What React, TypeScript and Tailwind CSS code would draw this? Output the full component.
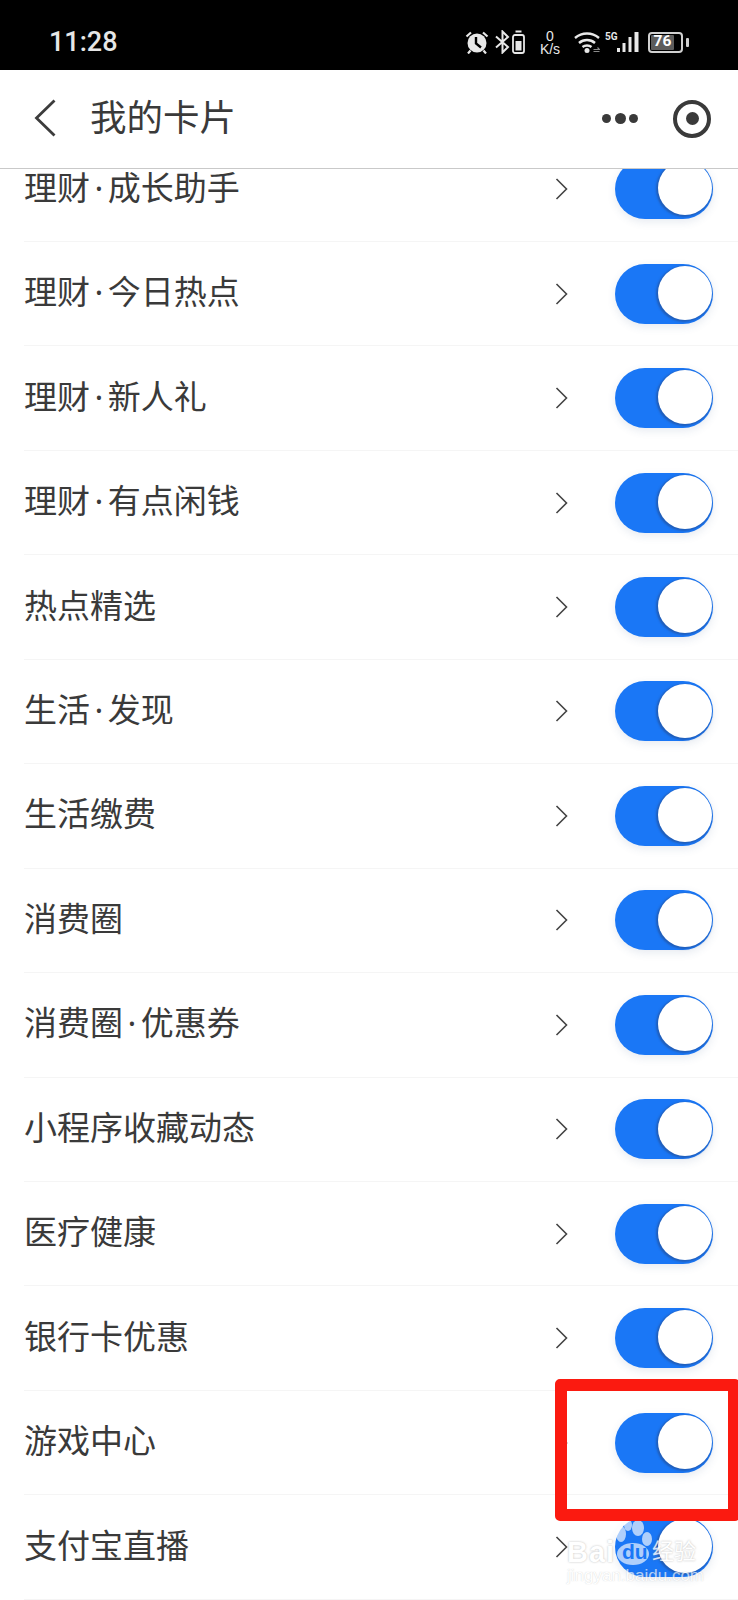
const rows = [
  "理财·成长助手",
  "理财·今日热点",
  "理财·新人礼",
  "理财·有点闲钱",
  "热点精选",
  "生活·发现",
  "生活缴费",
  "消费圈",
  "消费圈·优惠券",
  "小程序收藏动态",
  "医疗健康",
  "银行卡优惠",
  "游戏中心",
  "支付宝直播",
];

function StatusIcons() {
  return (
    <div className="flex items-center text-[#e8e8e8]">
      {/* Alarm */}
      <svg width="24" height="24" viewBox="0 0 24 24">
        <circle cx="12" cy="13" r="9.500" fill="currentColor" />
        <path d="M11 7v6.500l5 4" stroke="#000" strokeWidth="2.400" fill="none" />
        <path d="M1.500 6.500L6 2.500M22.500 6.500L18 2.500M5.500 20.500L3 23.500M18.500 20.500L21 23.500" stroke="currentColor" strokeWidth="2.200" />
      </svg>
      {/* Bluetooth */}
      <svg width="15" height="24" viewBox="0 0 15 24" className="ml-[6px]">
        <path d="M1 6.500L13 17l-5.500 5.500v-21L13 7 1 17.500" stroke="currentColor" strokeWidth="2" fill="none" />
      </svg>
      {/* Small battery */}
      <svg width="13" height="24" viewBox="0 0 13 24" className="ml-[2px]">
        <path d="M3.500 1.500h6" stroke="currentColor" strokeWidth="2" />
        <rect x="1" y="5" width="11" height="18" rx="2" fill="none" stroke="currentColor" strokeWidth="1.800" />
        <rect x="3.500" y="11" width="6" height="9.500" fill="currentColor" />
      </svg>
      {/* Net speed */}
      <div className="ml-[13px] flex w-[24px] flex-col items-center gap-[1px] text-[14px] leading-[12px] font-['Liberation_Sans',sans-serif]">
        <span>0</span>
        <span>K/s</span>
      </div>
      {/* Wifi */}
      <svg width="26" height="22" viewBox="0 0 26 22" className="ml-[12px]">
        <path d="M1 7c7-6 17-6 24 0M5 12c4.500-4 11.500-4 16 0M8.500 16c2.500-2 6.500-2 9 0" stroke="currentColor" strokeWidth="2.400" fill="none" />
        <circle cx="13" cy="19.500" r="2.500" fill="currentColor" />
        <path d="M19.500 18.500h6l-2-2M19.500 20.500h6" stroke="#8a8a8a" strokeWidth="1.200" fill="none" />
      </svg>
      {/* 5G signal */}
      <svg width="34" height="22" viewBox="0 0 34 22" className="ml-[5px]">
        <text x="0" y="8.500" fontSize="10" fontWeight="700" fill="currentColor" fontFamily="Roboto, sans-serif">5G</text>
        <rect x="12" y="17" width="3" height="4" fill="currentColor" />
        <rect x="17.500" y="12" width="3" height="9" fill="currentColor" />
        <rect x="23.500" y="6" width="3" height="15" fill="currentColor" />
        <rect x="29.500" y="1" width="4" height="20" fill="currentColor" />
      </svg>
      {/* Battery */}
      <div className="ml-[9px] flex items-center">
        <div className="flex h-[21px] w-[35px] items-center overflow-hidden rounded-[4px] border-2 border-[#d0d0d0] p-[1px]">
          <div className="flex h-full w-[23px] items-center justify-center rounded-[1px] bg-[#5c5c5c] text-[15.500px] leading-none font-bold text-white font-['Roboto',sans-serif]">
            76
          </div>
        </div>
        <div className="ml-[3px] h-[9px] w-[3px] rounded-[1px] bg-[#d0d0d0]" />
      </div>
    </div>
  );
}

function Toggle() {
  return (
    <div className="flex h-[60px] w-[98px] items-center justify-end rounded-full bg-[#1a77f6] pr-[1.500px] shadow-[0_3px_8px_rgba(60,90,140,0.12)]">
      <div className="-mt-[1.500px] h-[54px] w-[54px] rounded-full bg-white shadow-[-1px_1px_2px_1px_rgba(35,85,165,0.75)]" />
    </div>
  );
}

function Row({ label }: { label: string }) {
  const parts = label.split("·");
  return (
    <div className="flex h-[104.46px] items-center justify-between border-b border-[#f5f5f5] pr-[25px]">
      <span className="-mt-[4px] text-[33px] leading-none text-[#3a3a3a]">
        {parts[0]}
        {parts[1] && <span className="mx-[4.500px]">·</span>}
        {parts[1]}
      </span>
      <div className="flex items-center gap-[47px]">
        <svg width="13" height="22" viewBox="0 0 13 22">
          <path d="M1.500 1l10 10-10 10" stroke="#444444" strokeWidth="1.600" fill="none" />
        </svg>
        <Toggle />
      </div>
    </div>
  );
}

export default function App() {
  return (
    <div className="relative h-[1600px] w-[738px] overflow-hidden bg-white font-['Noto_Sans','Noto_Sans_CJK_SC',sans-serif]">
      {/* Status bar */}
      <div className="flex h-[70px] items-center justify-between bg-black pl-[49px] pr-[49px] pt-[14px]">
        <span className="text-[27px] leading-none font-medium text-[#e6e6e6] font-['Roboto',sans-serif]">11:28</span>
        <StatusIcons />
      </div>

      {/* Header */}
      <div className="relative z-10 flex h-[99px] items-center border-b border-[#c9c9c9] bg-white pl-[34px] pr-[27px]">
        <svg width="22" height="38" viewBox="0 0 22 38" className="-mt-[2px]">
          <path d="M20.500 1.500L2.500 19l18 17.500" stroke="#3c3c3c" strokeWidth="2.800" fill="none" />
        </svg>
        <span className="ml-[34px] -mt-[3px] text-[36.500px] leading-none text-[#3a3a3a]">我的卡片</span>
        <div className="ml-auto -mt-[1px] flex items-center">
          <div className="flex items-center gap-[3.500px]">
            <div className="h-[9px] w-[9px] rounded-full bg-[#3a3a3a]" />
            <div className="h-[11px] w-[11px] rounded-full bg-[#3a3a3a]" />
            <div className="h-[9px] w-[9px] rounded-full bg-[#3a3a3a]" />
          </div>
          <div className="ml-[35px] flex h-[38px] w-[38px] items-center justify-center rounded-full border-[4px] border-[#3a3a3a]">
            <div className="h-[13px] w-[13px] rounded-full bg-[#3a3a3a]" />
          </div>
        </div>
      </div>

      {/* Card list */}
      <div className="-mt-[31.500px] ml-[24px]">
        {rows.map((label) => (
          <Row key={label} label={label} />
        ))}
      </div>

      {/* Watermark */}
      <div className="absolute left-[567px] top-[1519px] h-[66px] w-[135px] text-white">
        <svg width="42" height="50" viewBox="0 0 42 50" className="absolute left-[47px] top-0 opacity-65">
          <ellipse cx="7" cy="15" rx="5" ry="8" fill="#ffffff" />
          <ellipse cx="14" cy="6" rx="4" ry="6" fill="#ffffff" />
          <ellipse cx="24" cy="9" rx="6" ry="8" fill="#ffffff" />
          <ellipse cx="33" cy="20" rx="5" ry="7" fill="#ffffff" />
          <ellipse cx="19" cy="35" rx="16" ry="11" fill="#ffffff" />
        </svg>
        <span className="absolute left-[55px] top-[22px] text-[21px] leading-none font-bold text-[#1a77f6] font-['Liberation_Sans',sans-serif]">
          du
        </span>
        <span className="absolute left-0 top-[19px] text-[29px] leading-none font-bold tracking-[1px] opacity-80 font-['Liberation_Sans',sans-serif] [text-shadow:0_0_2px_rgba(110,110,110,0.6)]">
          Bai
        </span>
        <span className="absolute left-[85px] top-[19px] text-[22px] leading-none opacity-80 font-['Noto_Sans_CJK_SC',sans-serif] [text-shadow:0_0_2px_rgba(110,110,110,0.6)]">
          经验
        </span>
        <span className="absolute left-0 top-[48px] whitespace-nowrap text-[17px] leading-none opacity-65 font-['Liberation_Sans',sans-serif] [text-shadow:0_0_1px_rgba(110,110,110,0.5)]">
          jingyan.baidu.com
        </span>
      </div>

      {/* Red annotation */}
      <div className="absolute left-[555px] top-[1379px] h-[142px] w-[185px] rounded-[5px] border-[12px] border-[#fb1a10]" />
    </div>
  );
}
